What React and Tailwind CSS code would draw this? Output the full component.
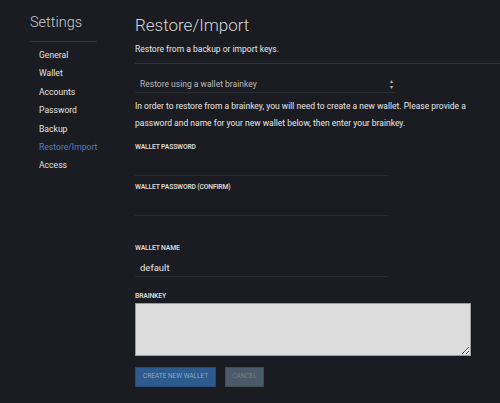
import React, { useState } from "react";

const menuItems = ["General", "Wallet", "Accounts", "Password", "Backup", "Restore/Import", "Access"];

const Field = ({ label, value, className = "" }) => (
  <div className={className}>
    <label className="block text-[6.8px] font-semibold uppercase tracking-tight text-[#d8d8d8]">{label}</label>
    <div className="w-[253px] border-b border-[#2c2d33] h-[24px] flex items-end pb-[1px] pl-[5px]">
      <span className="text-[9.5px] text-[#e6e6e6]">{value}</span>
    </div>
  </div>
);

export default function App() {
  const [active] = useState("Restore/Import");

  return (
    <div className="w-[500px] h-[403px] bg-[#1b1c21] flex overflow-hidden" style={{ fontFamily: "Roboto, 'Liberation Sans', sans-serif" }}>
      {/* Sidebar */}
      <div className="w-[135px] shrink-0 pl-[30px] pt-[14px]">
        <h1 className="text-[14.5px] font-light text-[#c9c9cc] leading-[18px]">Settings</h1>
        <div className="w-[67px] border-b border-[#33343a] mt-[9px]" />
        <ul className="mt-[4px] pl-[9px]">
          {menuItems.map((item) => (
            <li
              key={item}
              className={`text-[8.6px] leading-[18.4px] ${item === active ? "text-[#4f7fc0]" : "text-[#e2e2e2]"}`}
            >
              {item}
            </li>
          ))}
        </ul>
      </div>

      {/* Main content */}
      <div className="flex-1 pt-[14px]">
        <h2 className="text-[17px] font-light text-[#d4d4d6] leading-[22px]">Restore/Import</h2>
        <p className="text-[8.5px] text-[#e6e6e6] mt-[7px]">Restore from a backup or import keys.</p>
        <div className="border-b border-[#34353b] mt-[7px]" />

        <div className="w-[260px] mt-[14px] border-b border-[#2c2d33] flex items-center justify-between pl-[5px] pr-[2px] pb-[1px]">
          <span className="text-[8.5px] text-[#b9b9bc]">Restore using a wallet brainkey</span>
          <span className="text-[6px] text-[#b9b9bc] leading-[6px] flex flex-col items-center">
            <span>▴</span>
            <span>▾</span>
          </span>
        </div>

        <p className="text-[8.5px] leading-[17px] text-[#e6e6e6] mt-[5px] pr-[10px]">
          In order to restore from a brainkey, you will need to create a new wallet. Please provide a password and name for your new wallet below, then enter your brainkey.
        </p>

        <Field label="Wallet Password" value="" className="mt-[10px]" />
        <Field label="Wallet Password (Confirm)" value="" className="mt-[6px]" />
        <Field label="Wallet Name" value="default" className="mt-[27px]" />

        <div className="mt-[14px]">
          <label className="block text-[6.8px] font-semibold uppercase tracking-tight text-[#d8d8d8]">Brainkey</label>
          <textarea
            className="block mt-[2px] w-[336px] h-[53px] bg-[#dcdcdc] border border-[#9a9a9a] resize-y outline-none"
          />
        </div>

        <div className="flex gap-[9px] mt-[11px]">
          <button className="h-[20px] px-[7px] bg-[#2d5b8e] text-[#8aa7cc] text-[6.5px] uppercase border border-[#234a78]">
            Create New Wallet
          </button>
          <button className="h-[20px] px-[6px] bg-[#4a5a68] text-[#6f7d8a] text-[6.5px] uppercase border border-[#3e4c58]">
            Cancel
          </button>
        </div>
      </div>
    </div>
  );
}
